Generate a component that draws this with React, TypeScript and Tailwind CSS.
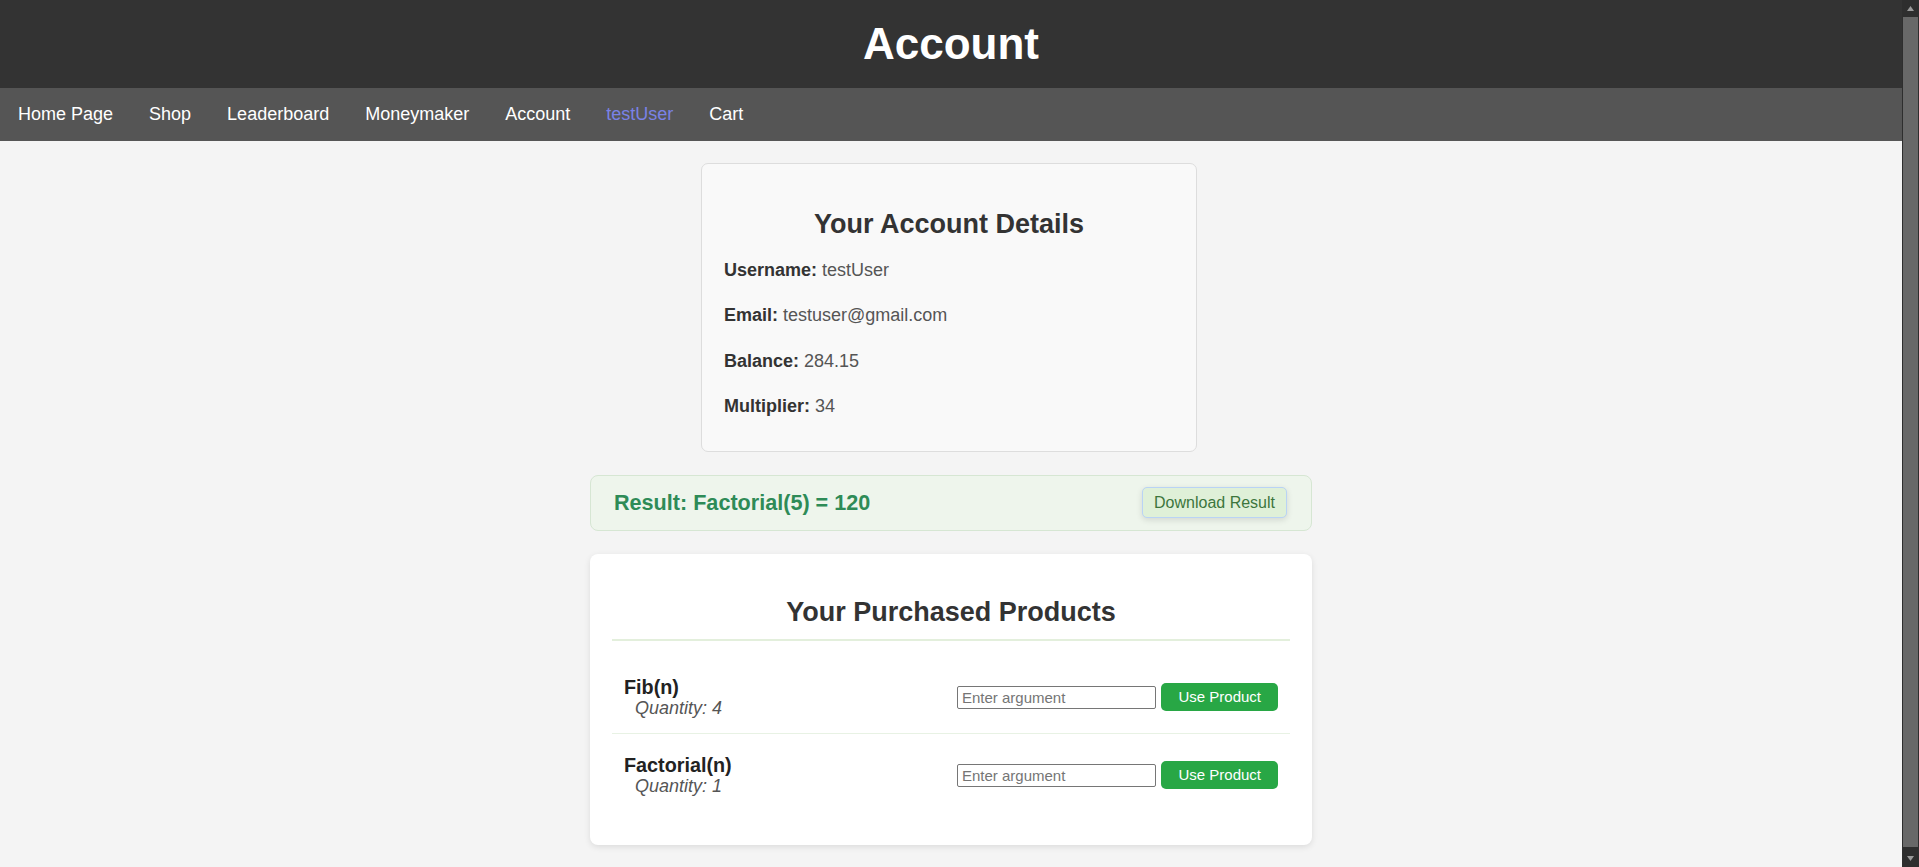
const navLinks = [
  { label: "Home Page" },
  { label: "Shop" },
  { label: "Leaderboard" },
  { label: "Moneymaker" },
  { label: "Account" },
  { label: "testUser", active: true },
  { label: "Cart" },
];

const details = [
  { label: "Username:", value: "testUser" },
  { label: "Email:", value: "testuser@gmail.com" },
  { label: "Balance:", value: "284.15" },
  { label: "Multiplier:", value: "34" },
];

const products = [
  { name: "Fib(n)", quantity: 4 },
  { name: "Factorial(n)", quantity: 1 },
];

function ProductRow(props: { name: string; quantity: number; last: boolean }) {
  return (
    <div
      className={
        "flex items-center justify-between px-[12px] pt-[13px] pb-[14px] mb-[7px] " +
        (props.last ? "border-b border-transparent" : "border-b border-[#e8f2e4]")
      }
    >
      <div className="flex flex-col">
        <span className="text-[19.8px] font-bold text-[#222] leading-[22.5px]">{props.name}</span>
        <span className="text-[18px] italic text-[#555] leading-[20.5px] ml-[11px]">
          Quantity: {props.quantity}
        </span>
      </div>
      <div className="flex items-center gap-[5.5px]">
        <input
          type="text"
          placeholder="Enter argument"
          className="w-[199px] h-[23.5px] border border-[#767676] rounded-[2px] px-[4px] text-[15px] text-[#222] placeholder:text-[#757575] bg-white outline-none"
        />
        <button className="h-[28px] px-[17px] rounded-[5px] bg-[#28a745] text-white text-[15px]">
          Use Product
        </button>
      </div>
    </div>
  );
}

function Scrollbar() {
  return (
    <div className="w-[17px] h-full bg-[#2e2e2e] flex flex-col shrink-0">
      <div className="h-[17px] flex items-center justify-center">
        <svg width="7" height="5" viewBox="0 0 7 5">
          <path d="M3.5 0 L7 5 L0 5 Z" fill="#9a9a9a" />
        </svg>
      </div>
      <div className="flex-1 mx-[1px] mb-[3px] bg-[#686868]" />
      <div className="h-[17px] flex items-center justify-center">
        <svg width="7" height="5" viewBox="0 0 7 5">
          <path d="M0 0 L7 0 L3.5 5 Z" fill="#9a9a9a" />
        </svg>
      </div>
    </div>
  );
}

export default function App() {
  return (
    <div className="h-screen flex bg-[#f4f4f4] font-['Liberation_Sans',Arial,sans-serif]">
      <div className="flex-1 min-w-0 overflow-hidden">
        <header className="h-[88px] bg-[#333] flex items-center justify-center">
          <h1 className="text-[44px] font-bold text-white leading-[50px]">Account</h1>
        </header>
        <nav className="h-[53px] bg-[#555] flex items-center">
          {navLinks.map((link) => (
            <a
              key={link.label}
              href="#"
              className={
                "px-[18px] text-[18px] leading-[21px] " +
                (link.active ? "text-[#7a82e6]" : "text-white")
              }
            >
              {link.label}
            </a>
          ))}
        </nav>

        <main className="flex flex-col items-center pt-[22px] pb-[29px] gap-[23px]">
          <section className="w-[496px] mr-[4px] bg-[#f9f9f9] border border-[#ddd] rounded-[7px] px-[22px] pt-[22px] pb-[31.5px]">
            <h2 className="mt-[23px] text-center text-[27px] font-bold text-[#333] leading-[30px]">
              Your Account Details
            </h2>
            <div className="mt-[18px] flex flex-col gap-[18.9px]">
              {details.map((d) => (
                <p key={d.label} className="text-[18px] leading-[26.4px] text-[#555]">
                  <strong className="font-bold text-[#333]">{d.label}</strong> {d.value}
                </p>
              ))}
            </div>
          </section>

          <section className="w-[722px] h-[56px] flex items-center justify-between bg-[#eef5ec] border border-[#d6e6d3] rounded-[8px] pl-[23px] pr-[24px]">
            <h3 className="text-[21.6px] font-bold text-[#2e8b57]">Result: Factorial(5) = 120</h3>
            <button className="h-[31px] px-[11px] rounded-[5px] bg-[#dff0d8] border border-[#b9d3f5] text-[#3c763d] text-[16px] shadow-[0_2px_6px_rgba(0,0,0,0.12)]">
              Download Result
            </button>
          </section>

          <section className="w-[722px] bg-white rounded-[8px] shadow-[0_2px_6px_rgba(0,0,0,0.1)] px-[22px] pt-[22px] pb-[26px]">
            <h2 className="mt-[21px] text-center text-[27px] font-bold text-[#333] leading-[31px] pb-[11px] border-b-2 border-[#e3efdc] mb-[22px]">
              Your Purchased Products
            </h2>
            {products.map((p, i) => (
              <ProductRow key={p.name} name={p.name} quantity={p.quantity} last={i === products.length - 1} />
            ))}
          </section>
        </main>
      </div>
      <Scrollbar />
    </div>
  );
}
